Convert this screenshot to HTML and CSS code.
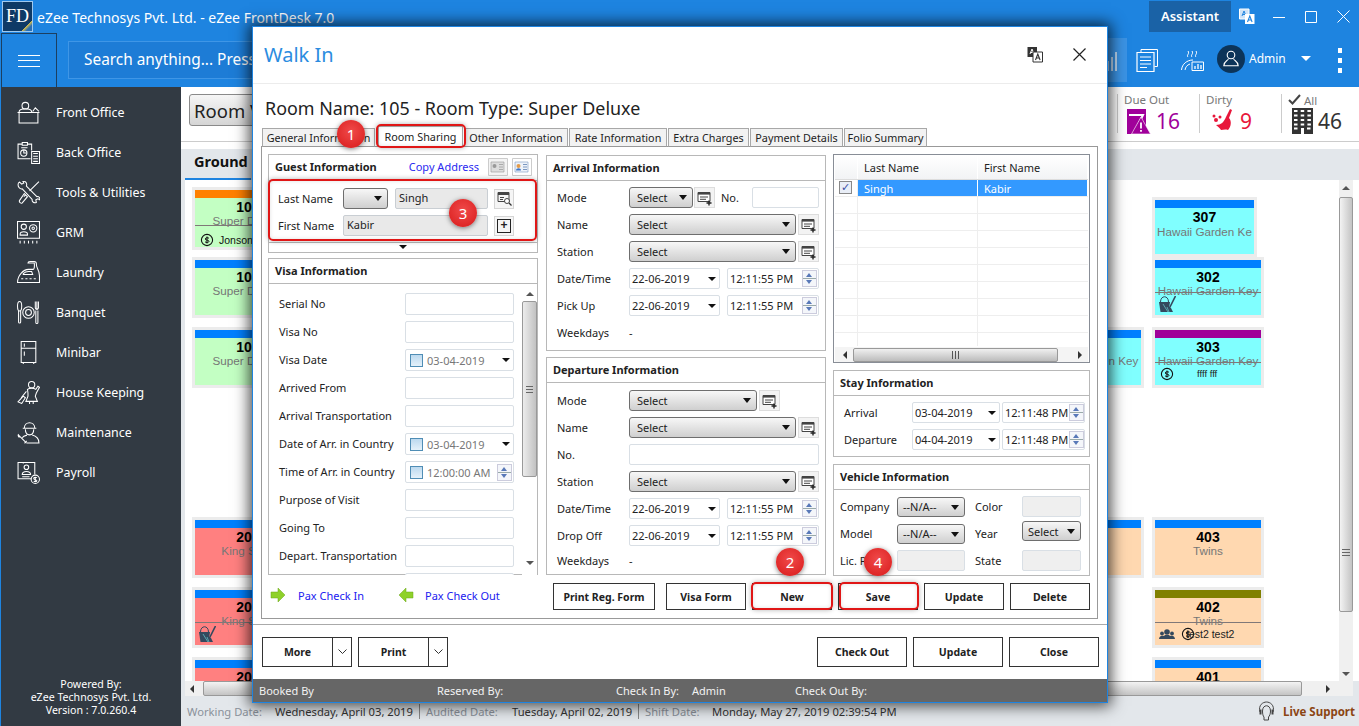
FILE: index.html
```html
<!DOCTYPE html>
<html lang="en">
<head>
<meta charset="utf-8">
<title>eZee FrontDesk - Walk In</title>
<link rel="stylesheet" href="styles.css">
</head>
<body>
<svg class="defs" aria-hidden="true">
  <symbol id="i-add" viewBox="0 0 16 16"><path d="M1 2.5h12v9H1z" fill="#fff" stroke="#444"/><path d="M1 2h12v2.6H1z" fill="#444"/><path d="M3 7h8M3 9.3h6" stroke="#444"/><path d="M12 10.5v5M9.5 13h5" stroke="#222" stroke-width="1.4"/></symbol>
  <symbol id="i-mop" viewBox="0 0 17 16"><path d="M0 6h11l-1.500 10H1.500z" fill="#34495e"/><path d="M1.500 6c0-7 8-7 8 0" fill="none" stroke="#34495e"/><path d="M16.500 0 10 13" stroke="#34495e" stroke-width="1.600"/><path d="M7 11l5 1 2 4H7z" fill="#34495e"/><path d="M4 8l5 8M8 11l2 5" stroke="#80ffff" stroke-width=".5"/></symbol>
  <symbol id="i-coin" viewBox="0 0 14 14"><circle cx="7" cy="7" r="5.6" fill="none" stroke="#111" stroke-width="1.1"/><path d="M7 3.5v7M9 5.3C8.4 4.5 5.2 4.5 5.2 6c0 1.6 3.8 .7 3.8 2.3 0 1.5-3.2 1.4-4 .5" fill="none" stroke="#111"/></symbol>
  <symbol id="i-guests" viewBox="0 0 16 11"><circle cx="8" cy="3" r="2.8" fill="#34495e"/><circle cx="3" cy="4.5" r="1.9" fill="#34495e"/><circle cx="13" cy="4.5" r="1.9" fill="#34495e"/><path d="M0 10c0-3 3-4 5-3l1-1h4l1 1c2-1 5 0 5 3z" fill="#34495e"/></symbol>
  <symbol id="i-card-a" viewBox="0 0 20 18"><path d="M.5 .5h19v17H.5z" fill="#f4f4f4" stroke="#ccc"/><path d="M3 4h13v10H3z" fill="#ddd" stroke="#999" stroke-width=".6"/><circle cx="6.500" cy="8" r="2" fill="#999"/><path d="M11 6.500h4M11 9h4M11 11.500h4" stroke="#aaa"/></symbol>
  <symbol id="i-card-b" viewBox="0 0 20 18"><path d="M.5 .5h19v17H.5z" fill="#fff" stroke="#ccc"/><path d="M3 4h13v10H3z" fill="#eef3fa" stroke="#7a97c0" stroke-width=".6"/><circle cx="6.500" cy="8" r="2" fill="#e39b4a"/><path d="M4 12.500c0-3 5-3 5 0z" fill="#3f76c6"/><path d="M11 6.500h4M11 9h4M11 11.500h4" stroke="#7a97c0"/></symbol>
</svg>

<div class="app">
  <header class="titlebar">
    <div class="logo">FD</div>
    <div class="app-title">eZee Technosys Pvt. Ltd. - eZee FrontDesk 7.0</div>
    <div class="assistant">Assistant</div>
    <svg class="win-translate" width="16" height="17" viewBox="0 0 16 17"><path d="M.5 1h9.500v10H.5z" fill="#cfe3f7" stroke="#fff"/><path d="M3 8l2-5 2 5M3.800 6.500h2.600" stroke="#1e84e0" fill="none"/><path d="M6 6h9.500v10H6z" fill="#fff"/><path d="M8.500 14l2.300-6 2.300 6M9.300 12h3" stroke="#1e84e0" fill="none" stroke-width="1.100"/></svg>
    <svg class="win-btn" width="12" height="12" viewBox="0 0 12 12"><path d="M0 6.500h12" stroke="#fff"/></svg>
    <svg class="win-btn" width="12" height="12" viewBox="0 0 12 12"><path d="M.5 .5h11v11H.5z" fill="none" stroke="#fff"/></svg>
    <svg class="win-btn win-close" width="13" height="13" viewBox="0 0 13 13"><path d="M.5 .5l12 12M12.500 .5l-12 12" stroke="#fff"/></svg>
  </header>

  <div class="toolbar">
    <div class="burger"><i></i><i></i><i></i></div>
    <div class="search">Search anything... Press F3</div>
    <div class="tool-chart"><svg width="14" height="24" viewBox="0 0 14 24"><path d="M2 23V13M6 23V9M10 23V4" stroke="#bcd8f2" stroke-width="2" fill="none"/></svg></div>
    <svg class="tool-docs" width="22" height="23" viewBox="0 0 22 23"><path d="M5 3.500V.5h16.500v17h-3" fill="none" stroke="#fff"/><path d="M1 3.500h17v19H1z" fill="#1e84e0" stroke="#fff" stroke-width="1.200"/><path d="M4 8h11M4 11.500h11M4 15h11M4 18.500h7" stroke="#fff"/></svg>
    <svg class="tool-steam" width="23" height="22" viewBox="0 0 23 22"><path d="M7 8c-2-2 2-3 0-6M11 8c-2-2 2-3 0-6M15 8c-2-2 2-3 0-6" fill="none" stroke="#fff"/><path d="M.5 21C1 15 6 11 12 11" fill="none" stroke="#fff"/><path d="M4 21c.5-3 2-5 5-6" fill="none" stroke="#fff"/><path d="M11 13h11.500v8.500H11z" fill="#1e84e0" stroke="#fff"/><path d="M14 20v-3M17 20v-5M20 20v-4" stroke="#fff" stroke-width="1.300"/></svg>
    <div class="avatar"><svg width="16" height="17" viewBox="0 0 16 17"><circle cx="8" cy="5" r="3.800" fill="none" stroke="#fff" stroke-width="1.100"/><path d="M5.500 8.500C5 11 .8 11 .8 15.800h14.400C15.200 11 11 11 10.500 8.500" fill="none" stroke="#fff" stroke-width="1.100"/></svg></div>
    <div class="admin">Admin</div>
    <span class="admin-caret"></span>
    <div class="kebab"><i></i><i></i><i></i></div>
  </div>

  <div class="workspace">
    <nav class="side">
      <ul class="side-list">
        <li class="side-item">
          <svg class="side-icon" viewBox="0 0 22 22"><circle cx="8" cy="4.500" r="3.200"/><path d="M2 10.500C2 8.500 5 7.500 8 7.500s6 1 6 3M15 10l2.500-3.500L21 10M.5 11h21M2 11.500v9.500h18v-9.500"/></svg>
          <span>Front Office</span>
        </li>
        <li class="side-item">
          <svg class="side-icon" viewBox="0 0 22 22"><path d="M13 17H1V3h4M10 3h4v6M5 1.500h5V4H5z"/><circle cx="6.500" cy="11.500" r="3"/><path d="M6.500 8.500v3h3M4 6.500h6"/><path d="M14 10h7.500v11.500H14zM15.500 12h4.500M15.500 14.500h4.500M15.500 17h4.500M15.500 19.500h4.500"/></svg>
          <span>Back Office</span>
        </li>
        <li class="side-item">
          <svg class="side-icon" viewBox="0 0 22 22"><path d="M1 3.500c0-1 .5-2 1.500-2.500l2 2 2-1-1-2C8 0 10 2 9 5l10 10c2-.5 3 1 3 3l-2-1-2 1 .5 2.500c-2 1-4.500-.5-4-3L5 7.500C3 8 1 6 1 3.500z"/><path d="M21 .5l-9 9M8.500 13l-2 2M7 12l3 3-5 6c-1 1-3.500-1-2.500-2.500z"/></svg>
          <span>Tools &amp; Utilities</span>
        </li>
        <li class="side-item">
          <svg class="side-icon" viewBox="0 0 22 22"><path d="M.5 .5h21v16H.5z"/><circle cx="6.500" cy="5.500" r="2.500"/><path d="M3 12.500c0-3 7-3 7 0v1H3z"/><circle cx="15.500" cy="7" r="3.500"/><circle cx="15.500" cy="7" r="1.200"/><path d="M3 19v2.500M7 19v2.500M11 19v2.500M15 19v2.500M19 19v2.500"/></svg>
          <span>GRM</span>
        </li>
        <li class="side-item">
          <svg class="side-icon" viewBox="0 0 22 22"><path d="M.5 20.500h21V14c0-3-1-5-2-7-1-1.500-1-4-1-4.500 0-1-1-2-2-2h-4c-1 0-2 .5-2 1.500h6c.5 3 0 6-1 6H11C6 8 .5 14 .5 20.500z"/><path d="M6 12c1.500-1.500 3-2 5-2h3l1 3H6z"/><path d="M4 17h2M8 17h2M12 17h2M16 17h2"/></svg>
          <span>Laundry</span>
        </li>
        <li class="side-item">
          <svg class="side-icon" viewBox="0 0 22 22"><ellipse cx="2.500" cy="5" rx="2" ry="4.500"/><path d="M1.500 9.500v10.500a1 1 0 0 0 2 0V9.500"/><circle cx="11" cy="11" r="5.500"/><circle cx="11" cy="11" r="2.800"/><path d="M17.500 .5v6c0 2 3 2 3 0v-6M19 .5v8M18 9v11.500a1 1 0 0 0 2 0V9"/></svg>
          <span>Banquet</span>
        </li>
        <li class="side-item">
          <svg class="side-icon" viewBox="0 0 22 22"><path d="M4 .5h14v20H4zM4 7h14M7 2.500v3M7 10v4M6 21v1M16 21v1"/></svg>
          <span>Minibar</span>
        </li>
        <li class="side-item">
          <svg class="side-icon" viewBox="0 0 22 22"><circle cx="14" cy="3.500" r="3"/><path d="M10 8c2-1.500 6-1.500 8 0l2-3 1.500 1-3 5.500-1 3 2 5H8.500l2-5v-3zM12 19v3M15.500 19v3"/><path d="M9 10L4 16M6 14.500L1 20l3.500 1.500L8 16z"/></svg>
          <span>House Keeping</span>
        </li>
        <li class="side-item">
          <svg class="side-icon" viewBox="0 0 22 22"><path d="M7 7c0-7 10-7 10 0zM5.500 7h13M8 8c0 7 8 7 8 0M9.500 13.500C7 14 5.500 15 5 16M14.500 13.500c4 1 6.500 3 6.500 7.500H9"/><path d="M1 13l7 7M1.500 12.500c-1 1 0 3 1 3M7 21c1 0 2-1 2-2" /></svg>
          <span>Maintenance</span>
        </li>
        <li class="side-item">
          <svg class="side-icon" viewBox="0 0 22 22"><path d="M14 17H1V1.500h16V13M6 1v1.500"/><circle cx="9" cy="6" r="2.200"/><path d="M5 13c0-4 8-4 8 0zM5 15h7"/><circle cx="17.500" cy="17.500" r="4"/><path d="M17.500 15v5M19 16c-1-1-3-.5-3 .7 0 1.500 3 .8 3 2.200 0 1-2 1.200-3 .3"/></svg>
          <span>Payroll</span>
        </li>
      </ul>
      <div class="powered">Powered By:<br>eZee Technosys Pvt. Ltd.<br>Version : 7.0.260.4</div>
    </nav>

    <main class="main">
      <div class="stats">
        <div class="view-select">Room View</div>
        <div class="stat stat-due">
          <div class="stat-label">Due Out</div>
          <div class="stat-val">
            <svg width="25" height="26" viewBox="0 0 25 26"><path d="M1 1h19v25H1z" fill="#a0009a"/><path d="M3 7h14l-7 14" fill="none" stroke="#fff" stroke-width="2"/><path d="M15 9l9.500 17H5.500z" fill="#a0009a" stroke="#fff" stroke-width=".6"/><path d="M15 14.500v6M15 22v1.800" stroke="#fff" stroke-width="1.800"/></svg>
            <span>16</span>
          </div>
        </div>
        <div class="stat stat-dirty">
          <div class="stat-label">Dirty</div>
          <div class="stat-val">
            <svg width="24" height="26" viewBox="0 0 24 26"><circle cx="3" cy="8" r="1.500" fill="#e8163a"/><circle cx="5" cy="12" r="2" fill="#e8163a"/><circle cx="9" cy="9" r="1.500" fill="#e8163a"/><path d="M19 1l2 1-3 8c3 3 2 9-1 12-3-1-5 0-7 0-1-2-3-3-5-5 5 0 8-3 10-8z" fill="#e8163a"/></svg>
            <span>9</span>
          </div>
        </div>
        <div class="stat stat-all">
          <div class="stat-label"><svg width="13" height="11" viewBox="0 0 13 11"><path d="M1 6l3.500 3.500L12 1" fill="none" stroke="#444" stroke-width="2"/></svg> All</div>
          <div class="stat-val">
            <svg width="23" height="26" viewBox="0 0 23 26"><path d="M1 0h21v26H1z" fill="#333"/><path d="M3 3h17M3 7.500h17M3 12h17M3 16.500h17M3 20.500h4M16 20.500h4" stroke="#fff" stroke-width="2" stroke-dasharray="3.500 3.200" fill="none"/><path d="M10 20h3v6h-3z" fill="#fff"/></svg>
            <span>46</span>
          </div>
        </div>
      </div>

      <div class="floorbar"><div class="floor-tab">Ground Floor</div></div>

      <div class="canvas-row">
        <div class="canvas">
          <section class="floor">
            <article class="card green cut-j">
              <div class="bar orange"></div><div class="num">105</div><div class="type">Super Deluxe</div>
              <div class="foot"><svg class="ico-coin"><use href="#i-coin"/></svg><span class="who">Jonson</span></div>
            </article>
            <div class="slot"></div><div class="slot"></div>
            <article class="card cyan w99 tall">
              <div class="bar"></div><div class="num">307</div><div class="type">Hawaii Garden Ke</div>
            </article>

            <article class="card green">
              <div class="bar"></div><div class="num">104</div><div class="type">Super Deluxe</div>
            </article>
            <div class="slot"></div><div class="slot"></div>
            <article class="card cyan struck">
              <div class="bar"></div><div class="num">302</div><div class="type">Hawaii Garden Key</div>
              <div class="foot"><svg class="ico-mop"><use href="#i-mop"/></svg></div>
            </article>

            <article class="card green">
              <div class="bar"></div><div class="num">103</div><div class="type">Super Deluxe</div>
            </article>
            <div class="slot"></div>
            <article class="card cyan">
              <div class="bar"></div><div class="num">301</div><div class="type">Hawaii Garden Key</div>
            </article>
            <article class="card cyan struck">
              <div class="bar purple"></div><div class="num">303</div><div class="type">Hawaii Garden Key</div>
              <div class="foot"><svg class="ico-coin"><use href="#i-coin"/></svg><span class="who small">ffff fff</span></div>
            </article>
          </section>

          <section class="floor floor-lower">
            <article class="card red">
              <div class="bar"></div><div class="num">203</div><div class="type">King Suite</div>
            </article>
            <div class="slot"></div>
            <article class="card peach">
              <div class="bar"></div><div class="num">404</div><div class="type">Twins</div>
            </article>
            <article class="card peach">
              <div class="bar"></div><div class="num">403</div><div class="type">Twins</div>
            </article>

            <article class="card red struck">
              <div class="bar"></div><div class="num">202</div><div class="type">King Suite</div>
              <div class="foot"><svg class="ico-mop"><use href="#i-mop"/></svg></div>
            </article>
            <div class="slot"></div><div class="slot"></div>
            <article class="card peach struck">
              <div class="bar olive"></div><div class="num">402</div><div class="type">Twins</div>
              <div class="foot"><svg class="ico-guests"><use href="#i-guests"/></svg><svg class="ico-coin"><use href="#i-coin"/></svg><span class="who overlap">test2 test2</span></div>
            </article>

            <article class="card red">
              <div class="bar"></div><div class="num">201</div><div class="type">King Suite</div>
            </article>
            <div class="slot"></div><div class="slot"></div>
            <article class="card peach">
              <div class="bar"></div><div class="num">401</div><div class="type">Twins</div>
            </article>
          </section>
        </div>
        <div class="vscroll">
          <span class="tri tri-up"></span>
          <div class="vthumb"><span class="grip"></span></div>
          <span class="tri tri-down"></span>
        </div>
      </div>

      <div class="hscroll">
        <span class="tri tri-left"></span>
        <div class="hthumb"></div>
        <span class="tri tri-right"></span>
      </div>

      <footer class="status">
        <span class="st-lab w-88">Working Date:</span><span class="st-val w-144">Wednesday, April 03, 2019</span>
        <span class="st-lab w-93 st-sep">Audited Date:</span><span class="st-val w-126">Tuesday, April 02, 2019</span>
        <span class="st-lab w-74 st-sep">Shift Date:</span><span class="st-val">Monday, May 27, 2019 02:39:54 PM</span>
        <span class="live">
          <svg width="17" height="20" viewBox="0 0 17 20"><path d="M2 11C0 4 5 1 8.500 1S17 4 15 11" fill="none" stroke="#444"/><path d="M4.500 10c0-7 8-7 8 0 0 3-1 5-2 6v3H6v-3c-1-1-1.500-3-1.500-6z" fill="none" stroke="#444"/><path d="M1.500 8.500h2v5h-2zM13.500 8.500h2v5h-2z" fill="#444"/></svg>
          Live Support
        </span>
      </footer>
    </main>
  </div>
</div>

<div class="dialog">
  <div class="dlg-head">
    <h1 class="dlg-title">Walk In</h1>
    <svg class="dlg-translate" width="16" height="17" viewBox="0 0 16 17"><path d="M.5 1h9.500v10H.5z" fill="#333"/><path d="M3 8l2-5 2 5M3.800 6.500h2.600" stroke="#fff" fill="none"/><path d="M6 6h9.500v10H6z" fill="#fff" stroke="#333"/><path d="M8.500 14l2.300-6 2.300 6M9.300 12h3" stroke="#333" fill="none" stroke-width="1.100"/></svg>
    <svg class="dlg-close" width="13" height="13" viewBox="0 0 13 13"><path d="M.5 .5l12 12M12.500 .5l-12 12" stroke="#222" stroke-width="1.200"/></svg>
  </div>
  <div class="room-title">Room Name: 105 - Room Type: Super Deluxe</div>

  <div class="tabs">
    <div class="tab t-113">General Information</div>
    <div class="tab tab-on t-85">Room Sharing</div>
    <div class="tab t-104">Other Information</div>
    <div class="tab t-98">Rate Information</div>
    <div class="tab t-81">Extra Charges</div>
    <div class="tab t-93">Payment Details</div>
    <div class="tab t-83">Folio Summary</div>
  </div>

  <div class="panel">
    <div class="panel-cols">
      <div class="col col-left">
        <section class="group guest">
          <header class="g-head guest-head">
            <span>Guest Information</span>
            <span class="copy">Copy Address</span>
            <svg class="mini-card"><use href="#i-card-a"/></svg>
            <svg class="mini-card"><use href="#i-card-b"/></svg>
          </header>
          <div class="guest-body">
            <div class="guest-row">
              <label class="lab guest-lab">Last Name</label>
              <div class="select w-45"></div>
              <div class="input fill w-93">Singh</div>
              <div class="sq-btn"><svg width="15" height="15" viewBox="0 0 15 15"><path d="M1 1.500h11v9H1z" fill="none" stroke="#444"/><path d="M1 1h11v3H1z" fill="#444"/><path d="M3 6.500h4M3 8.500h3" stroke="#444"/><circle cx="10" cy="10" r="2.500" fill="#fff" stroke="#444"/><path d="M12 12l2.500 2.500" stroke="#333" stroke-width="1.300"/></svg></div>
            </div>
            <div class="guest-row">
              <label class="lab guest-lab">First Name</label>
              <div class="input fill w-145">Kabir</div>
              <div class="sq-btn"><span class="sq-plus">+</span></div>
            </div>
          </div>
          <div class="guest-toggle"><span class="tri tri-down black"></span></div>
        </section>

        <section class="group visa">
          <header class="g-head">Visa Information</header>
          <div class="visa-body">
            <div class="visa-rows">
              <div class="v-row"><label class="lab v-lab">Serial No</label><div class="input w-109"></div></div>
              <div class="v-row"><label class="lab v-lab">Visa No</label><div class="input w-109"></div></div>
              <div class="v-row"><label class="lab v-lab">Visa Date</label><div class="input w-109 chk"><i class="box"></i><span>03-04-2019</span><span class="tri tri-down black end"></span></div></div>
              <div class="v-row"><label class="lab v-lab">Arrived From</label><div class="input w-109"></div></div>
              <div class="v-row"><label class="lab v-lab">Arrival Transportation</label><div class="input w-109"></div></div>
              <div class="v-row"><label class="lab v-lab">Date of Arr. in Country</label><div class="input w-109 chk"><i class="box"></i><span>03-04-2019</span><span class="tri tri-down black end"></span></div></div>
              <div class="v-row"><label class="lab v-lab">Time of Arr. in Country</label><div class="input w-109 chk"><i class="box"></i><span>12:00:00 AM</span><span class="spin end"></span></div></div>
              <div class="v-row"><label class="lab v-lab">Purpose of Visit</label><div class="input w-109"></div></div>
              <div class="v-row"><label class="lab v-lab">Going To</label><div class="input w-109"></div></div>
              <div class="v-row"><label class="lab v-lab">Depart. Transportation</label><div class="input w-109"></div></div>
              <div class="v-row"><label class="lab v-lab"></label><div class="input w-109 edge"></div></div>
            </div>
            <div class="vbar">
              <span class="tri tri-up"></span>
              <div class="vbar-thumb"><span class="grip"></span></div>
              <span class="tri tri-down"></span>
            </div>
          </div>
        </section>
      </div>

      <div class="col col-mid">
        <section class="group arrival">
          <header class="g-head">Arrival Information</header>
          <div class="form">
            <div class="f-row"><label class="lab f-lab">Mode</label><div class="select w-64">Select</div><div class="add"><svg width="16" height="16"><use href="#i-add"/></svg></div><label class="lab no-lab">No.</label><div class="input w-67"></div></div>
            <div class="f-row"><label class="lab f-lab">Name</label><div class="select w-167">Select</div><div class="add gap"><svg width="16" height="16"><use href="#i-add"/></svg></div></div>
            <div class="f-row"><label class="lab f-lab">Station</label><div class="select w-167">Select</div><div class="add gap"><svg width="16" height="16"><use href="#i-add"/></svg></div></div>
            <div class="f-row"><label class="lab f-lab">Date/Time</label><div class="input date w-91"><span>22-06-2019</span><span class="tri tri-down black end"></span></div><div class="input time w-92"><span>12:11:55 PM</span><span class="spin end"></span></div></div>
            <div class="f-row"><label class="lab f-lab">Pick Up</label><div class="input date w-91"><span>22-06-2019</span><span class="tri tri-down black end"></span></div><div class="input time w-92"><span>12:11:55 PM</span><span class="spin end"></span></div></div>
            <div class="f-row"><label class="lab f-lab">Weekdays</label><span class="lab">-</span></div>
          </div>
        </section>

        <section class="group departure">
          <header class="g-head">Departure Information</header>
          <div class="form">
            <div class="f-row"><label class="lab f-lab">Mode</label><div class="select w-128">Select</div><div class="add gap"><svg width="16" height="16"><use href="#i-add"/></svg></div></div>
            <div class="f-row"><label class="lab f-lab">Name</label><div class="select w-167">Select</div><div class="add gap"><svg width="16" height="16"><use href="#i-add"/></svg></div></div>
            <div class="f-row"><label class="lab f-lab">No.</label><div class="input w-190"></div></div>
            <div class="f-row"><label class="lab f-lab">Station</label><div class="select w-167">Select</div><div class="add gap"><svg width="16" height="16"><use href="#i-add"/></svg></div></div>
            <div class="f-row"><label class="lab f-lab">Date/Time</label><div class="input date w-91"><span>22-06-2019</span><span class="tri tri-down black end"></span></div><div class="input time w-92"><span>12:11:55 PM</span><span class="spin end"></span></div></div>
            <div class="f-row"><label class="lab f-lab">Drop Off</label><div class="input date w-91"><span>22-06-2019</span><span class="tri tri-down black end"></span></div><div class="input time w-92"><span>12:11:55 PM</span><span class="spin end"></span></div></div>
            <div class="f-row f-row-tight"><label class="lab f-lab">Weekdays</label><span class="lab">-</span></div>
          </div>
        </section>
      </div>

      <div class="col col-right">
        <section class="share-grid">
          <div class="grid-head"><span class="gh gh-c"></span><span class="gh gh-l">Last Name</span><span class="gh gh-f">First Name</span></div>
          <div class="grid-row grid-sel"><span class="gc gc-c"><i class="tick">&#10003;</i></span><span class="gc gc-l">Singh</span><span class="gc gc-f">Kabir</span></div>
          <div class="grid-row"><span class="gc gc-c"></span><span class="gc gc-l"></span><span class="gc gc-f"></span></div>
          <div class="grid-row"><span class="gc gc-c"></span><span class="gc gc-l"></span><span class="gc gc-f"></span></div>
          <div class="grid-row"><span class="gc gc-c"></span><span class="gc gc-l"></span><span class="gc gc-f"></span></div>
          <div class="grid-row"><span class="gc gc-c"></span><span class="gc gc-l"></span><span class="gc gc-f"></span></div>
          <div class="grid-row"><span class="gc gc-c"></span><span class="gc gc-l"></span><span class="gc gc-f"></span></div>
          <div class="grid-row"><span class="gc gc-c"></span><span class="gc gc-l"></span><span class="gc gc-f"></span></div>
          <div class="grid-row"><span class="gc gc-c"></span><span class="gc gc-l"></span><span class="gc gc-f"></span></div>
          <div class="grid-row"><span class="gc gc-c"></span><span class="gc gc-l"></span><span class="gc gc-f"></span></div>
          <div class="grid-row grid-last"><span class="gc gc-c"></span><span class="gc gc-l"></span><span class="gc gc-f"></span></div>
          <div class="grid-hbar">
            <span class="tri tri-left"></span>
            <div class="grid-thumb"><span class="hgrip"></span></div>
            <span class="tri tri-right"></span>
          </div>
        </section>

        <section class="group stay">
          <header class="g-head">Stay Information</header>
          <div class="stay-body">
            <div class="s-row"><label class="lab s-lab">Arrival</label><div class="input date w-88b"><span>03-04-2019</span><span class="tri tri-down black end"></span></div><div class="input time w-83"><span>12:11:48 PM</span><span class="spin end"></span></div></div>
            <div class="s-row"><label class="lab s-lab">Departure</label><div class="input date w-88b"><span>04-04-2019</span><span class="tri tri-down black end"></span></div><div class="input time w-83"><span>12:11:48 PM</span><span class="spin end"></span></div></div>
          </div>
        </section>

        <section class="group vehicle">
          <header class="g-head">Vehicle Information</header>
          <div class="vehicle-body">
            <label class="lab">Company</label><div class="select w-68 narrow-sel">--N/A--</div><label class="lab">Color</label><div class="input fill-light w-59"></div>
            <label class="lab">Model</label><div class="select w-68 narrow-sel">--N/A--</div><label class="lab">Year</label><div class="select w-59 year-sel">Select</div>
            <label class="lab">Lic. Plate</label><div class="input fill-light w-68"></div><label class="lab">State</label><div class="input fill-light w-59"></div>
          </div>
        </section>
      </div>
    </div>

    <div class="panel-foot">
      <div class="pax">
        <svg class="pax-arrow" width="16" height="16" viewBox="0 0 16 16"><path d="M1 5h7V1l7 7-7 7v-4H1z" fill="#8fd12a" stroke="#6aa51b" stroke-width=".5"/></svg>
        <a class="pax-link pax-in">Pax Check In</a>
        <svg class="pax-arrow" width="16" height="16" viewBox="0 0 16 16"><path d="M15 5H8V1L1 8l7 7v-4h7z" fill="#8fd12a" stroke="#6aa51b" stroke-width=".5"/></svg>
        <a class="pax-link pax-out">Pax Check Out</a>
      </div>
      <div class="actions">
        <button class="btn b-102">Print Reg. Form</button>
        <button class="btn b-80 m-11">Visa Form</button>
        <button class="btn b-80 m-6">New</button>
        <button class="btn b-80 m-6">Save</button>
        <button class="btn b-80 m-6">Update</button>
        <button class="btn b-80 m-6">Delete</button>
      </div>
    </div>
  </div>

  <div class="dlg-rule"></div>

  <div class="dlg-actions">
    <div class="split"><button class="btn big b-71">More</button><button class="btn big chev"><svg width="9" height="6" viewBox="0 0 9 6"><path d="M.5 .5l4 4 4-4" fill="none" stroke="#333"/></svg></button></div>
    <div class="split s-left"><button class="btn big b-71">Print</button><button class="btn big chev"><svg width="9" height="6" viewBox="0 0 9 6"><path d="M.5 .5l4 4 4-4" fill="none" stroke="#333"/></svg></button></div>
    <button class="btn big b-90 auto">Check Out</button>
    <button class="btn big b-90 m-6">Update</button>
    <button class="btn big b-90 m-6">Close</button>
  </div>

  <footer class="dlg-foot">
    <span class="df-1">Booked By</span>
    <span class="df-2">Reserved By:</span>
    <span class="df-3">Check In By:</span>
    <span class="df-4">Admin</span>
    <span>Check Out By:</span>
  </footer>
</div>

<div class="hl hl-tab"></div>
<div class="hl hl-fields"></div>
<div class="hl hl-new"></div>
<div class="hl hl-save"></div>
<div class="dot dot-1">1</div>
<div class="dot dot-2">2</div>
<div class="dot dot-3">3</div>
<div class="dot dot-4">4</div>
</body>
</html>
```

FILE: styles.css
```css
* { box-sizing: border-box; }
html, body { margin: 0; padding: 0; height: 726px; overflow: hidden; }
body { width: 1359px; position: relative; font-family: "Noto Sans", "Liberation Sans", sans-serif; font-size: 11px; color: #222; background: #fff; }
.defs { position: absolute; width: 0; height: 0; }
button { font: inherit; padding: 0; }
ul { list-style: none; margin: 0; padding: 0; }

/* app frame */
.app { width: 1359px; height: 726px; display: flex; flex-direction: column; background: #1e84e0; }
.titlebar { height: 33px; display: flex; align-items: center; color: #fff; flex: none; }
.logo { width: 31px; height: 31px; margin-left: 2px; background: linear-gradient(135deg, #0e3a66 82%, #e0c040 82%, #2a6fb5 90%); border: 1px solid #9fc9ef; color: #fff; font: 18px/28px "Liberation Serif", serif; text-align: center; flex: none; }
.app-title { margin-left: 4px; padding-top: 2px; font-size: 14px; color: #fff; }
.assistant { margin-left: auto; width: 82px; height: 31px; background: #1a62a6; font-size: 13px; font-weight: 600; line-height: 31px; text-align: center; }
.win-translate { margin-left: 8px; margin-right: 18px; }
.win-btn { margin-right: 20px; flex: none; }
.win-close { margin-right: 9px; }

.toolbar { height: 54px; display: flex; align-items: center; flex: none; color: #fff; }
.burger { width: 56px; height: 54px; margin-left: 1px; border: 1px solid #1c3f60; border-bottom: 0; display: flex; flex-direction: column; align-items: center; justify-content: center; gap: 4.500px; flex: none; }
.burger i { display: block; width: 22px; height: 1px; background: #fff; }
.search { width: 1032px; height: 38px; margin-left: 11px; padding-left: 15px; border: 1px solid #3f96e6; background: #1d7cd6; font-size: 15.400px; line-height: 35px; flex: none; }
.tool-chart { width: 27px; height: 44px; background: #3b93e4; flex: none; padding: 10px 0 0 6px; }
.tool-docs { margin-left: 9px; flex: none; }
.tool-steam { margin-left: 23px; flex: none; }
.avatar { width: 28px; height: 28px; margin: 0 0 3px 13px; border-radius: 50%; background: #0c3459; display: flex; align-items: center; justify-content: center; flex: none; }
.admin { margin: 0 0 4px 4px; font-size: 12px; flex: none; }
.admin-caret { margin: 0 0 3px 15px; border: 5px solid transparent; border-top: 5px solid #fff; border-bottom: 0; flex: none; }
.kebab { margin-left: 27px; display: flex; flex-direction: column; gap: 5px; flex: none; }
.kebab i { display: block; width: 4px; height: 5px; background: #fff; }

.workspace { flex: 1; display: flex; min-height: 0; padding-left: 1px; }

/* sidebar */
.side { width: 180px; background: #323a43; display: flex; flex-direction: column; color: #fff; padding-top: 5px; flex: none; }
.side-item { height: 40px; display: flex; align-items: center; padding-left: 16px; font-size: 12.400px; }
.side-icon { width: 23px; height: 23px; margin-right: 16px; fill: none; stroke: #fff; stroke-width: 1; flex: none; }
.powered { margin-top: auto; padding-bottom: 9px; text-align: center; font-size: 10.600px; line-height: 13px; }

/* main */
.main { flex: 1; background: #e3e7eb; display: flex; flex-direction: column; min-width: 0; }
.stats { height: 55px; background: #fff; border-bottom: 1px solid #ccc; display: flex; align-items: center; padding-left: 8px; flex: none; }
.view-select { width: 160px; height: 32px; margin-bottom: 8px; padding-left: 4px; border: 1px solid #8a8a8a; border-radius: 3px; background: linear-gradient(#f6f6f6, #d5d5d5); font-size: 18.500px; line-height: 32px; color: #222; }
.stat { width: 82px; height: 39px; margin-bottom: 1px; border-left: 1px solid #ccc; padding-left: 6px; flex: none; }
.stat-due { margin-left: auto; }
.stat-all { margin-right: 0; width: 78px; }
.stat-label { font-size: 11.500px; line-height: 12px; color: #777; height: 14px; white-space: nowrap; }
.stat-val { display: flex; align-items: flex-end; gap: 5px; font-size: 21px; line-height: 26px; height: 26px; }
.stat-due .stat-val { color: #a0009a; padding-left: 2px; }
.stat-dirty .stat-val { color: #e8163a; padding-left: 5px; }
.stat-all .stat-val { color: #333; padding-left: 3px; gap: 4px; }
.stat-dirty .stat-label { color: #777; }

.floorbar { height: 38px; padding: 7px 0 0 4px; background: linear-gradient(#fff 7px, #e3e7eb 7px); flex: none; }
.floor-tab { width: 66px; height: 31px; padding-left: 9px; border-bottom: 2px solid #1e84e0; font-size: 14.500px; font-weight: 700; line-height: 25px; color: #111; white-space: nowrap; }

.canvas-row { height: 501px; margin-left: 4px; display: flex; background: #fff; flex: none; }
.canvas { flex: 1; min-width: 0; padding: 10px 78px 0 10px; overflow: hidden; }
.floor { display: grid; grid-template-columns: 106px 1fr 106px 106px; grid-auto-rows: 70px; column-gap: 14px; }
.floor-lower { margin-top: 120px; }
.slot { min-width: 0; }

.card { position: relative; height: 55px; background: #c3ffc3; box-shadow: 0 0 0 3px #ececec; color: #777; text-align: center; overflow: hidden; }
.card.w99 { width: 99px; }
.card.tall { height: 54px; margin-top: 10px; }
.card.cut-j { height: 57px; }
.green { background: #c3ffc3; }
.cyan { background: #80ffff; }
.red { background: #ff8080; }
.peach { background: #ffd8b0; }
.bar { height: 8px; background: #0080ff; }
.bar.orange { background: #ff8000; }
.bar.purple { background: #a00099; }
.bar.olive { background: #808000; }
.num { margin-top: 2px; font: 700 14px/15px "Liberation Sans", sans-serif; color: #000; }
.type { margin-top: -1px; height: 13px; margin-bottom: 1px; font: 11.700px/13px "Liberation Sans", sans-serif; white-space: nowrap; color: #777; }
.tall .type { margin-top: 0; }
.struck::after { content: ""; position: absolute; left: 0; right: 0; top: 32px; height: 1px; background: #807878; }
.cut-j::after { content: ""; position: absolute; left: 0; right: 0; top: 35px; height: 1px; background: #807878; }
.foot { display: flex; align-items: center; padding-left: 4px; height: 16px; gap: 5px; font: 10.500px/14px "Liberation Sans", sans-serif; color: #222; }
.struck .foot { margin-top: -2px; }
.ico-mop { width: 17px; height: 16px; flex: none; }
.ico-coin { width: 14px; height: 14px; margin-left: 1px; flex: none; }
.ico-guests { width: 16px; height: 11px; flex: none; }
.who.small { margin-left: 18px; font-size: 9.500px; }
.who.overlap { margin-left: -14px; }
.cut-j .foot { padding-top: 3px; height: 20px; color: #111; }

.vscroll { width: 14px; margin-right: 6px; background: #f0f0f0; display: flex; flex-direction: column; align-items: center; justify-content: space-between; padding: 6px 0 5px; flex: none; }
.vthumb { width: 14px; height: 415px; margin-top: 2px; margin-bottom: 55px; border: 1px solid #999; border-radius: 2px; background: linear-gradient(90deg, #f3f3f3, #c4c4c4); display: flex; align-items: flex-end; justify-content: center; }
.grip { display: block; width: 8px; height: 8px; margin-bottom: 54px; background: repeating-linear-gradient(#666 0 1px, transparent 1px 3px); }

.tri { display: block; width: 0; height: 0; border: 4px solid transparent; flex: none; }
.tri-up { border-top: 0; border-bottom: 4px solid #555; }
.tri-down { border-bottom: 0; border-top: 4px solid #555; }
.tri-left { border-left: 0; border-right: 4px solid #333; }
.tri-right { border-right: 0; border-left: 4px solid #333; }
.tri.black { border-top-color: #111; }

.hscroll { height: 15px; margin-left: 4px; margin-right: 6px; background: #f0f0f0; display: flex; align-items: center; padding-left: 5px; flex: none; }
.hthumb { width: 1099px; height: 15px; margin-left: 9px; border: 1px solid #999; border-radius: 2px; background: linear-gradient(#f3f3f3, #c4c4c4); }
.hscroll .tri-right { margin-left: 24px; }

.status { flex: 1; display: flex; align-items: center; padding-left: 6px; font-size: 11.200px; white-space: nowrap; }
.st-lab { color: #8a919a; }
.st-val { color: #333; }
.st-sep { border-left: 1px solid #888; padding-left: 6px; }
.w-88 { width: 88px; }
.w-144 { width: 144px; }
.w-93 { width: 93px; }
.w-126 { width: 126px; }
.w-74 { width: 74px; }
.live { margin-left: auto; margin-right: 4px; display: flex; align-items: center; gap: 8px; font-size: 11.500px; color: #8b4513; font-weight: 700; }

/* dialog */
.dialog { position: absolute; left: 252px; top: 26px; width: 856px; height: 677px; background: #fff; border: 1px solid #1e84e0; box-shadow: 0 0 14px 3px rgba(0,0,0,.7); display: flex; flex-direction: column; }
.dlg-head { height: 57px; display: flex; align-items: center; padding: 0 0 2px 11px; border-bottom: 1px solid #ececec; flex: none; }
.dlg-title { margin: 0; font-size: 20px; font-weight: 400; color: #2b8ce0; }
.dlg-translate { margin-left: auto; margin-right: 30px; }
.dlg-close { margin-right: 21px; }
.room-title { height: 44px; padding: 12px 0 0 12px; font-size: 17.900px; line-height: 24px; color: #222; flex: none; }
.tabs { height: 19px; display: flex; padding-left: 9px; flex: none; position: relative; }
.tab { height: 19px; margin-right: 1px; border: 1px solid #a8a8a8; border-bottom: 1px solid #999; background: #f2f2f2; font-size: 10.800px; line-height: 18px; text-align: center; white-space: nowrap; }
.tab-on { height: 21px; margin-top: -2px; margin-left: 2px; background: #fff; border-bottom-color: #fff; line-height: 20px; }
.t-113 { width: 113px; }
.t-85 { width: 85px; }
.t-104 { width: 104px; }
.t-98 { width: 98px; }
.t-81 { width: 81px; }
.t-93 { width: 93px; }
.t-83 { width: 83px; }

.panel { width: 837px; height: 473px; margin: -1px 0 0 8px; padding: 7px 7px 0 6px; border: 1px solid #999; flex: none; }
.panel-cols { height: 422px; display: flex; gap: 8px; }
.col { display: flex; flex-direction: column; flex: none; }
.col-left { width: 270px; gap: 5px; }
.col-mid { width: 280px; gap: 6px; padding-top: 1px; }
.col-right { width: 257px; margin-left: -1px; gap: 7px; }

.group { border: 1px solid #b8b8b8; background: #fff; flex: none; }
.g-head { height: 25px; padding-left: 6px; border-bottom: 1px solid #b8b8b8; font-weight: 700; line-height: 24px; color: #222; white-space: nowrap; }
.lab { line-height: 14px; color: #222; white-space: nowrap; }

.input { height: 21px; border: 1px solid #d9dfe5; border-radius: 2px; background: #fff; line-height: 19px; padding-left: 3px; white-space: nowrap; flex: none; display: flex; align-items: center; }
.input.fill { background: #e9e9e9; border-color: #c9ced3; padding-bottom: 2px; }
.input.fill-light { background: #efefef; }
.select { height: 21px; padding-left: 7px; border: 1px solid #6e6e6e; border-radius: 3px; background: linear-gradient(#f7f7f7, #cfcfcf); line-height: 19px; display: flex; align-items: center; position: relative; flex: none; }
.select::after { content: ""; position: absolute; right: 5px; top: 7px; border: 4px solid transparent; border-top: 5px solid #111; border-bottom: 0; }
.w-45 { width: 45px; }
.w-59 { width: 59px; }
.w-64 { width: 64px; }
.w-67 { width: 67px; }
.w-68 { width: 68px; }
.w-83 { width: 83px; }
.w-88b { width: 88px; }
.w-91 { width: 91px; }
.w-92 { width: 92px; }
.w-93 { width: 93px; }
.w-109 { width: 109px; }
.w-128 { width: 128px; }
.w-145 { width: 145px; }
.w-167 { width: 167px; }
.w-190 { width: 190px; }
.end { margin-left: auto; margin-right: 3px; }
.spin { display: block; width: 15px; height: 17px; margin-right: 1px; border: 1px solid #ccd; background: linear-gradient(#f4f6fa 48%, #9aa 48%, #9aa 54%, #f4f6fa 54%); position: relative; flex: none; }
.spin::before { content: ""; position: absolute; left: 3px; top: 2px; border: 3.500px solid transparent; border-top: 0; border-bottom: 4px solid #5878b8; }
.spin::after { content: ""; position: absolute; left: 3px; bottom: 2px; border: 3.500px solid transparent; border-bottom: 0; border-top: 4px solid #5878b8; }
.add { width: 21px; height: 21px; margin-left: 1px; border: 1px solid #ddd; background: #f3f3f3; display: flex; align-items: center; justify-content: center; flex: none; }
.add.gap { margin-left: 2px; }
.sq-btn { width: 20px; height: 20px; margin-left: 6px; border: 1px solid #d5d5d5; background: #f5f5f5; display: flex; align-items: center; justify-content: center; flex: none; }
.sq-plus { width: 14px; height: 14px; border: 1px solid #222; font: 700 12px/11px "Liberation Sans", sans-serif; text-align: center; color: #222; }

/* guest */
.guest { height: 99px; }
.guest-head { display: flex; align-items: center; padding-right: 5px; padding-bottom: 2px; border-bottom: 0; }
.copy { margin-left: auto; margin-right: 9px; font-weight: 400; color: #2a2af0; }
.mini-card { width: 20px; height: 18px; margin-left: 4px; flex: none; }
.mini-card:first-of-type { margin-left: 0; }
.guest-body { height: 63px; padding: 4px 0 0 9px; border-bottom: 1px solid #b8b8b8; border-top: 1px solid #b8b8b8; }
.guest-row { display: flex; align-items: center; height: 27px; }
.guest-lab { width: 65px; flex: none; }
.guest-row .input.w-93 { margin-left: 7px; }
.guest-toggle { height: 9px; display: flex; justify-content: center; padding-top: 2px; }

/* visa */
.visa { height: 317px; }
.visa-body { height: 291px; display: flex; overflow: hidden; }
.visa-rows { width: 253px; padding: 6px 0 0 10px; flex: none; }
.v-row { height: 28px; display: flex; align-items: center; }
.v-lab { width: 126px; flex: none; }
.v-row .input { height: 22px; }
.input.chk { padding-left: 4px; gap: 4px; color: #777; }
.box { display: block; width: 13px; height: 13px; border: 1px solid #4f8db5; background: linear-gradient(#bcd9ef, #e4f1fa); flex: none; }
.vbar { width: 15px; height: 291px; background: #fff; display: flex; flex-direction: column; align-items: center; padding-top: 8px; flex: none; }
.vbar-thumb { width: 15px; height: 176px; margin-top: 5px; margin-bottom: 84px; border: 1px solid #999; border-radius: 2px; background: linear-gradient(90deg, #ececec, #c2c2c2); display: flex; align-items: center; justify-content: center; flex: none; }
.vbar-thumb .grip { width: 7px; height: 7px; margin: 0; }

/* arrival / departure */
.arrival { height: 196px; }
.departure { height: 218px; }
.form { padding: 3px 0 0 10px; }
.departure .form { padding-top: 4px; }
.f-row { height: 27px; display: flex; align-items: center; }
.f-row-tight { height: 23px; }
.f-lab { width: 72px; flex: none; }
.no-lab { margin-left: 6px; width: 31px; flex: none; }
.time { margin-left: 7px; }
.date, .time { padding-left: 2px; color: #222; }

/* right */
.share-grid { height: 209px; border: 1px solid #888d96; padding: 1px; flex: none; background: #fff; }
.grid-head { height: 24px; display: flex; background: linear-gradient(#fff, #f2f3f5); border-bottom: 1px solid #ddd; line-height: 24px; color: #222; }
.gh { display: block; border-right: 1px solid #fff; }
.gh-c { width: 23px; }
.gh-l { width: 120px; padding-left: 6px; }
.gh-f { flex: 1; padding-left: 6px; }
.grid-row { height: 17px; display: flex; border-bottom: 1px solid #eee; }
.grid-last { height: 13px; border-bottom: 0; }
.gc { display: block; border-right: 1px solid #eee; }
.gc-c { width: 23px; }
.gc-l { width: 120px; padding-left: 6px; line-height: 17px; }
.gc-f { flex: 1; padding-left: 6px; border-right: 0; line-height: 17px; }
.grid-sel { height: 17px; }
.grid-sel .gc-l, .grid-sel .gc-f { background: #3399ff; color: #fff; border-right: 1px solid #fff; }
.tick { display: block; width: 13px; height: 13px; margin: 1px 0 0 4px; border: 1px solid #888; background: #e9eef7; font: 700 11px/11px "DejaVu Sans", sans-serif; color: #3b4fa5; text-align: center; }
.grid-hbar { height: 15px; margin-top: 1px; display: flex; align-items: center; padding-left: 8px; background: #f4f4f4; }
.grid-thumb { width: 205px; height: 14px; margin-left: 6px; border: 1px solid #999; border-radius: 2px; background: linear-gradient(#f0f0f0, #bcbcbc); display: flex; align-items: center; justify-content: center; }
.hgrip { display: block; width: 8px; height: 8px; background: repeating-linear-gradient(90deg, #555 0 1px, transparent 1px 3px); }
.grid-hbar .tri-right { margin-left: 20px; }

.stay { height: 87px; }
.stay-body { padding: 3px 0 0 10px; }
.s-row { height: 27px; display: flex; align-items: center; }
.s-lab { width: 68px; flex: none; }
.s-row .time { margin-left: 2px; }
.s-row .spin { margin-right: 0; }

.vehicle { height: 112px; }
.vehicle-body { display: grid; grid-template-columns: 57px 68px 57px 59px; grid-auto-rows: 27px; align-items: center; padding: 3px 0 0 6px; }
.vehicle-body .lab:nth-of-type(even) { padding-left: 10px; }
.vehicle-body .select { height: 20px; padding-left: 5px; }
.year-sel { margin-top: -5px; }

.panel-foot { height: 42px; display: flex; align-items: flex-start; }
.pax { width: 285px; height: 38px; display: flex; align-items: center; padding-left: 2px; flex: none; }
.pax-link { color: #2020f0; }
.pax-in { width: 100px; margin-left: 12px; }
.pax-out { margin-left: 11px; }
.actions { display: flex; padding-top: 7px; }
.btn { height: 27px; border: 1px solid #333; background: #fff; color: #222; font-size: 10.500px; font-weight: 700; cursor: default; flex: none; }
.b-102 { width: 102px; }
.b-80 { width: 80px; }
.b-90 { width: 90px; }
.b-71 { width: 71px; }
.m-11 { margin-left: 11px; }
.m-6 { margin-left: 6px; }
.btn.big { height: 30px; padding-bottom: 1px; }
.chev { width: 20px; margin-left: -1px; display: flex; align-items: center; justify-content: center; }

.dlg-rule { height: 1px; margin-top: 5px; background: #aaa; flex: none; }
.dlg-actions { display: flex; margin-top: 12px; padding: 0 8px 0 9px; flex: none; }
.split { display: flex; }
.s-left { margin-left: 6px; }
.auto { margin-left: auto; }
.dlg-foot { margin-top: auto; height: 23px; background: #666; color: #f2f2f2; display: flex; align-items: center; padding-left: 6px; white-space: nowrap; }
.df-1 { width: 178px; }
.df-2 { width: 179px; }
.df-3 { width: 76px; }
.df-4 { width: 103px; }

/* tutorial marks over the screenshot */
.hl { position: absolute; border: 2px solid #e01616; border-radius: 5px; box-shadow: 0 0 5px rgba(0,0,0,.3), inset 0 0 4px rgba(0,0,0,.12); }
.hl-tab { left: 376px; top: 124px; width: 90px; height: 24px; }
.hl-fields { left: 268px; top: 179px; width: 269px; height: 62px; }
.hl-new { left: 751px; top: 582px; width: 82px; height: 28px; }
.hl-save { left: 839px; top: 582px; width: 80px; height: 28px; }
.dot { position: absolute; z-index: 2; width: 28px; height: 28px; border-radius: 50%; background: radial-gradient(circle at 50% 40%, #f04a4a, #d81a1a); box-shadow: 0 1px 5px rgba(0,0,0,.5); color: #fff; font-size: 15px; line-height: 28px; text-align: center; }
.dot-1 { left: 337px; top: 120px; }
.dot-2 { left: 776px; top: 548px; }
.dot-3 { left: 449px; top: 199px; }
.dot-4 { left: 864px; top: 548px; }
```
